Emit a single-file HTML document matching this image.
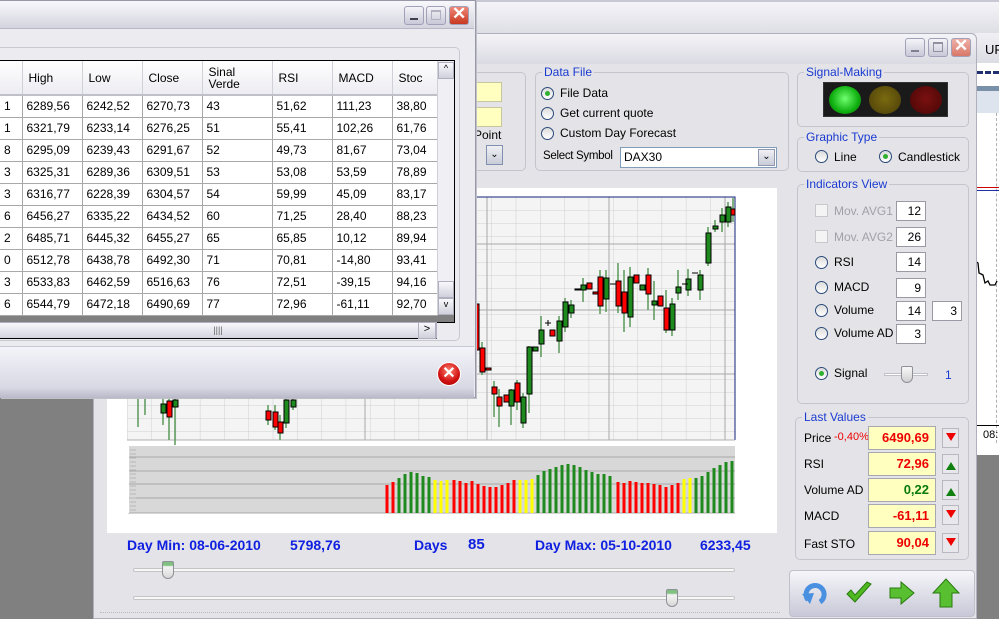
<!DOCTYPE html>
<html><head><meta charset="utf-8"><style>
*{box-sizing:border-box;margin:0;padding:0}
body{width:999px;height:619px;overflow:hidden;position:relative;background:#808080;font-family:"Liberation Sans",sans-serif;font-size:12px;color:#000}
.a{position:absolute}
.grp{position:absolute;border:1px solid #c4c4cc;border-radius:5px}
.gt{position:absolute;top:-8px;left:6px;background:#e4e4e8;color:#1a3ad0;padding:0 2px;font-size:12px;line-height:14px}
.rad{position:absolute;width:13px;height:13px;border-radius:50%;border:1px solid #2a4a7a;background:linear-gradient(#dcdcdc,#fff)}
.rad.on::after{content:"";position:absolute;left:3px;top:3px;width:5px;height:5px;border-radius:50%;background:#30b030}
.inp{position:absolute;background:#fff;border:1px solid #9a9aa4;text-align:right;padding-right:4px;line-height:18px;height:20px}
.yv{position:absolute;background:#ffffc0;border:1px solid #a8a8b0;text-align:right;padding-right:6px;font-weight:bold;font-size:13px;line-height:22px;height:24px;width:68px;left:868px}
.arr{position:absolute;left:942px;width:17px;height:20px;border:1px solid #b8b8c0;background:#e8e8ec}
.lv{position:absolute;left:804px;font-size:12px}
.wb{position:absolute;width:20px;height:19px;border-radius:3px;border:1px solid #a0a0b8;background:linear-gradient(#f4f4f8,#c8c8d8)}
table{border-collapse:collapse;table-layout:fixed}
td{border-right:1px solid #a8a8a8;border-bottom:1px solid #a8a8a8;height:22px;padding-left:4px;font-size:12px;white-space:nowrap;overflow:hidden;background:#fff}
th{font-weight:normal;text-align:left;padding-left:6px;height:34px;border-right:1px solid #d0d0d8;background:linear-gradient(#fff,#ececf2);font-size:12px;line-height:12px;border-bottom:2px solid #c0c0c8}
.bl{position:absolute;color:#1020e0;font-weight:bold;font-size:14px}
</style></head><body>

<div class="a" style="left:0;top:0;width:999px;height:36px;background:linear-gradient(#f4f4f8,#dcdce4);border-top:2px solid #c8c8d4"></div>

<div class="a" style="left:975px;top:33px;width:24px;height:422px;background:#fff">
 <div class="a" style="left:0;top:0;width:24px;height:30px;background:linear-gradient(#f0f0f4,#dcdce4)"></div>
 <div class="a" style="left:10px;top:9px;font-size:13px">UF</div>
 <div class="a" style="left:2px;top:38px;width:22px;height:4px;border-top:3px dashed #203070"></div>
 <div class="a" style="left:0;top:53px;width:24px;height:5px;background:#7890a8"></div>
 <div class="a" style="left:0;top:58px;width:24px;height:22px;background:#dde4ee"></div>
 <div class="a" style="left:21px;top:80px;height:330px;border-left:1px dashed #b0b0b0"></div>
 <div class="a" style="left:0;top:154px;width:24px;height:1px;background:#c00"></div>
 <div class="a" style="left:0;top:157px;width:24px;height:1px;background:#2030a0"></div>
 <svg class="a" style="left:0;top:220px" width="24" height="40"><path d="M0 8 L3 10 L4 20 L8 22 L10 30 L13 28 L15 32 L20 32 L22 28" fill="none" stroke="#000" stroke-width="1.3"/></svg>
 <div class="a" style="left:0;top:392px;width:24px;height:1px;background:#000"></div>
 <div class="a" style="left:8px;top:396px;font-size:11px">08:</div>
</div>

<div class="a" style="left:93px;top:33px;width:884px;height:586px;background:#e4e4e8;border:1px solid #b0b0bc;border-radius:6px 6px 0 0">
 <div class="a" style="left:0;top:0;width:882px;height:30px;background:linear-gradient(#f4f4f8,#dadae2);border-radius:6px 6px 0 0"></div>
</div>
<div class="wb" style="left:905px;top:38px"><div class="a" style="left:5px;top:11px;width:8px;height:2px;background:#808090"></div></div>
<div class="wb" style="left:928px;top:38px"><div class="a" style="left:4px;top:3px;width:10px;height:10px;border:1px solid #9090a0;border-top-width:2px"></div></div>
<div class="wb" style="left:951px;top:38px;background:linear-gradient(#f0b0a8,#d87868)"><div class="a" style="left:2px;top:-3px;color:#fff;font-size:17px;font-weight:bold">✕</div></div>

<div class="grp" style="left:440px;top:72px;width:86px;height:99px"></div>
<div class="a" style="left:476px;top:82px;width:26px;height:20px;background:#ffffc0;border:1px solid #c8c8a0"></div>
<div class="a" style="left:476px;top:107px;width:26px;height:20px;background:#ffffc0;border:1px solid #c8c8a0"></div>
<div class="a" style="left:474px;top:128px">Point</div>
<div class="a" style="left:486px;top:145px;width:17px;height:20px;border:1px solid #8090b0;background:linear-gradient(#f0f0f4,#c8ccd8);font-size:10px;text-align:center;line-height:18px">&#8964;</div>

<div class="grp" style="left:535px;top:72px;width:254px;height:99px"><div class="gt">Data File</div></div>
<div class="rad on" style="left:541px;top:87px"></div><div class="a" style="left:560px;top:86px">File Data</div>
<div class="rad" style="left:541px;top:107px"></div><div class="a" style="left:560px;top:106px">Get current quote</div>
<div class="rad" style="left:541px;top:127px"></div><div class="a" style="left:560px;top:126px">Custom Day Forecast</div>
<div class="a" style="left:543px;top:150px;font-size:11.5px;letter-spacing:-0.3px">Select Symbol</div>
<div class="a" style="left:620px;top:147px;width:157px;height:21px;background:#fff;border:1px solid #7f9db9;padding-left:3px;line-height:19px">DAX30
 <div class="a" style="right:1px;top:1px;width:17px;height:17px;background:linear-gradient(#f0f0f4,#c8ccd8);border:1px solid #9098b0;font-size:10px;text-align:center;line-height:14px">&#8964;</div></div>

<div class="grp" style="left:797px;top:72px;width:172px;height:55px"><div class="gt">Signal-Making</div></div>
<div class="a" style="left:823px;top:82px;width:125px;height:35px;background:#1a1a1a;border:1px solid #333"></div>
<div class="a" style="left:829px;top:86px;width:32px;height:28px;border-radius:50%;background:radial-gradient(circle at 50% 45%,#70ff70,#10b010 60%,#0a6a0a)"></div>
<div class="a" style="left:869px;top:86px;width:32px;height:28px;border-radius:50%;background:radial-gradient(circle at 50% 45%,#7a6a10,#4a3e08)"></div>
<div class="a" style="left:910px;top:86px;width:32px;height:28px;border-radius:50%;background:radial-gradient(circle at 50% 45%,#7a1010,#480606)"></div>

<div class="grp" style="left:797px;top:137px;width:172px;height:35px"><div class="gt">Graphic Type</div></div>
<div class="rad" style="left:815px;top:150px"></div><div class="a" style="left:834px;top:150px">Line</div>
<div class="rad on" style="left:879px;top:150px"></div><div class="a" style="left:898px;top:150px">Candlestick</div>

<div class="grp" style="left:797px;top:184px;width:172px;height:220px"><div class="gt">Indicators View</div></div>
<div class="a" style="left:815px;top:204px;width:13px;height:13px;border:1px solid #c8c8cc;background:#f4f4f4"></div><div class="a" style="left:834px;top:204px;color:#a0a0a8">Mov. AVG1</div>
<div class="inp" style="left:896px;top:201px;width:30px">12</div>
<div class="a" style="left:815px;top:230px;width:13px;height:13px;border:1px solid #c8c8cc;background:#f4f4f4"></div><div class="a" style="left:834px;top:230px;color:#a0a0a8">Mov. AVG2</div>
<div class="inp" style="left:896px;top:227px;width:30px">26</div>
<div class="rad" style="left:815px;top:256px"></div><div class="a" style="left:834px;top:255px">RSI</div><div class="inp" style="left:896px;top:252px;width:30px">14</div>
<div class="rad" style="left:815px;top:281px"></div><div class="a" style="left:834px;top:280px">MACD</div><div class="inp" style="left:896px;top:278px;width:30px">9</div>
<div class="rad" style="left:815px;top:304px"></div><div class="a" style="left:834px;top:303px">Volume</div><div class="inp" style="left:896px;top:301px;width:30px">14</div><div class="inp" style="left:932px;top:301px;width:30px">3</div>
<div class="rad" style="left:815px;top:327px"></div><div class="a" style="left:834px;top:326px">Volume AD</div><div class="inp" style="left:896px;top:324px;width:30px">3</div>
<div class="rad on" style="left:815px;top:367px"></div><div class="a" style="left:834px;top:366px">Signal</div>
<div class="a" style="left:884px;top:373px;width:44px;height:3px;border:1px solid #c0c0c8;background:#fff"></div>
<div class="a" style="left:901px;top:366px;width:12px;height:17px;background:linear-gradient(#f8f8f8,#d0d0d0);border:1px solid #909098;border-radius:2px 2px 6px 6px"></div>
<div class="a" style="left:945px;top:368px;color:#1a3ad0">1</div>

<div class="grp" style="left:795px;top:417px;width:174px;height:143px"><div class="gt">Last Values</div></div>
<div class="lv" style="top:431px">Price</div><div class="a" style="left:834px;top:431px;color:#e00;font-size:11px">-0,40%</div>
<div class="yv" style="top:426px;color:#e00">6490,69</div><div class="arr" style="top:428px"><div class="a" style="left:3px;top:4px;border:5px solid transparent;border-top:8px solid #e00"></div></div>
<div class="lv" style="top:457px">RSI</div>
<div class="yv" style="top:452px;color:#e00">72,96</div><div class="arr" style="top:454px"><div class="a" style="left:3px;top:2px;border:5px solid transparent;border-bottom:8px solid #108010"></div></div>
<div class="lv" style="top:483px">Volume AD</div>
<div class="yv" style="top:478px;color:#0a7a0a">0,22</div><div class="arr" style="top:480px"><div class="a" style="left:3px;top:2px;border:5px solid transparent;border-bottom:8px solid #108010"></div></div>
<div class="lv" style="top:509px">MACD</div>
<div class="yv" style="top:504px;color:#e00">-61,11</div><div class="arr" style="top:505px"><div class="a" style="left:3px;top:4px;border:5px solid transparent;border-top:8px solid #e00"></div></div>
<div class="lv" style="top:537px">Fast STO</div>
<div class="yv" style="top:531px;color:#e00">90,04</div><div class="arr" style="top:533px"><div class="a" style="left:3px;top:4px;border:5px solid transparent;border-top:8px solid #e00"></div></div>

<div class="a" style="left:789px;top:570px;width:186px;height:47px;background:linear-gradient(#f6f6fa,#c8c8d8);border-radius:4px;border:1px solid #c0c0cc"></div>
<svg class="a" style="left:800px;top:580px" width="30" height="28"><path d="M8 20 A9 9 0 1 1 20 22" fill="none" stroke="#4a90e0" stroke-width="5"/><path d="M2 14 L10 24 L14 13 Z" fill="#4a90e0"/></svg>
<svg class="a" style="left:845px;top:580px" width="28" height="26"><path d="M2 14 L10 22 L26 4 L22 2 L10 15 L6 10 Z" fill="#50b820" stroke="#2a7a10"/></svg>
<svg class="a" style="left:888px;top:579px" width="28" height="28"><path d="M2 9 H13 V3 L26 14 L13 25 V19 H2 Z" fill="#58c030" stroke="#2a7a10"/></svg>
<svg class="a" style="left:931px;top:578px" width="30" height="30"><path d="M15 1 L28 15 H21 V29 H9 V15 H2 Z" fill="#58c030" stroke="#2a7a10"/></svg>

<div class="a" style="left:107px;top:188px;width:670px;height:345px;background:#fff"></div>
<svg class="a" style="left:0;top:0" width="780" height="619">
 <defs>
  <pattern id="g" x="127" y="197" width="24.3" height="13" patternUnits="userSpaceOnUse"><path d="M0 0V13M0 0H24.3" stroke="#cfcfcf" stroke-width="1"/></pattern>
 </defs>
 <rect x="127" y="197" width="608" height="243" fill="#f4f4f4"/>
 <rect x="127" y="197" width="608" height="243" fill="url(#g)"/>
 <path d="M127 244H735M127 310H735M127 374H735M487 197V440M609 197V440M365 197V440M725 197V440" stroke="#a8a8a8"/>
 <path d="M127 197H735V440" stroke="#10207a" fill="none"/>
 <path d="M127 440H735" stroke="#b0b0b0"/>
 <g stroke="#5a9a5a" stroke-width="1.5">
  <path d="M482 342V375M494 381V417M499 389V427M511 389V425M517 380V410M523 393V428M529 346V413M541 316V357M559 316V353M565 298V332M571 300V318M583 278V302M600 270V314M606 270V312M618 263V313M624 270V332M630 267V327M648 268V310M654 281V320M666 290V333M672 298V336M678 270V300M688 269V296M700 270V300M708 227V266M715 220V232M722 208V232M728 202V227M733 198V222M138 398V427M145 395V415M163 398V425M169 398V440M175 398V445M268 405V425M275 405V430M280 415V440M286 398V428M293 398V410"/>
 </g>
 <g stroke="#000" stroke-width="1">
  <rect x="475" y="304" width="4" height="46" fill="#f00"/>
  <rect x="480" y="348" width="5" height="24" fill="#f00"/>
  <rect x="486" y="368" width="5" height="2" fill="#f00"/>
  <rect x="492" y="387" width="5" height="7" fill="#f00"/>
  <rect x="497" y="397" width="5" height="9" fill="#f00"/>
  <rect x="504" y="395" width="5" height="7" fill="#f00"/>
  <rect x="509" y="390" width="5" height="16" fill="#1e8a1e"/>
  <rect x="515" y="383" width="5" height="19" fill="#f00"/>
  <rect x="521" y="397" width="5" height="26" fill="#1e8a1e"/>
  <rect x="527" y="347" width="5" height="47" fill="#1e8a1e"/>
  <rect x="533" y="347" width="5" height="4" fill="#1e8a1e"/>
  <rect x="539" y="330" width="5" height="14" fill="#1e8a1e"/>
  <rect x="550" y="330" width="5" height="6" fill="#f00"/>
  <rect x="557" y="321" width="5" height="20" fill="#1e8a1e"/>
  <rect x="563" y="302" width="5" height="25" fill="#1e8a1e"/>
  <rect x="569" y="305" width="5" height="8" fill="#1e8a1e"/>
  <rect x="575" y="289" width="5" height="1" fill="#000"/>
  <rect x="581" y="285" width="5" height="5" fill="#1e8a1e"/>
  <rect x="587" y="283" width="5" height="6" fill="#f00"/>
  <rect x="593" y="292" width="5" height="2" fill="#f00"/>
  <rect x="598" y="277" width="5" height="29" fill="#f00"/>
  <rect x="604" y="278" width="5" height="21" fill="#1e8a1e"/>
  <rect x="616" y="281" width="5" height="25" fill="#f00"/>
  <rect x="622" y="292" width="5" height="21" fill="#f00"/>
  <rect x="628" y="277" width="5" height="40" fill="#1e8a1e"/>
  <rect x="634" y="275" width="5" height="8" fill="#f00"/>
  <rect x="640" y="285" width="5" height="5" fill="#1e8a1e"/>
  <rect x="646" y="275" width="5" height="19" fill="#f00"/>
  <rect x="652" y="301" width="5" height="4" fill="#1e8a1e"/>
  <rect x="658" y="296" width="5" height="10" fill="#f00"/>
  <rect x="664" y="308" width="5" height="22" fill="#f00"/>
  <rect x="670" y="304" width="5" height="26" fill="#1e8a1e"/>
  <rect x="676" y="287" width="5" height="6" fill="#1e8a1e"/>
  <rect x="686" y="279" width="5" height="11" fill="#1e8a1e"/>
  <rect x="698" y="275" width="5" height="15" fill="#1e8a1e"/>
  <rect x="706" y="233" width="5" height="30" fill="#1e8a1e"/>
  <rect x="713" y="226" width="5" height="3" fill="#1e8a1e"/>
  <rect x="720" y="215" width="5" height="7" fill="#1e8a1e"/>
  <rect x="726" y="207" width="5" height="15" fill="#1e8a1e"/>
  <rect x="731" y="209" width="4" height="6" fill="#f00"/>
  <rect x="161" y="404" width="5" height="9" fill="#1e8a1e"/>
  <rect x="167" y="401" width="5" height="16" fill="#f00"/>
  <rect x="173" y="400" width="5" height="7" fill="#1e8a1e"/>
  <rect x="266" y="411" width="5" height="9" fill="#f00"/>
  <rect x="273" y="412" width="5" height="15" fill="#f00"/>
  <rect x="278" y="422" width="5" height="11" fill="#f00"/>
  <rect x="284" y="400" width="5" height="23" fill="#1e8a1e"/>
  <rect x="291" y="400" width="5" height="7" fill="#1e8a1e"/>
 </g>
 <path d="M545 323h6M548 320v6M610 284h6M682 284h6M692 273h6" stroke="#000"/>
 <rect x="128" y="446" width="607" height="67" fill="#d8d8d8"/>
 <path d="M128 457H735M128 471H735M128 484H735M128 498H735M128 513H735" stroke="#a8a8a8"/>
 <path d="M128 446V513" stroke="#fff" stroke-width="2"/>
 <path d="M130 450h6M130 454h6M130 458h6M130 462h6M130 466h6M130 470h6M130 474h6M130 478h6M130 482h6M130 486h6M130 490h6M130 494h6M130 498h6M130 502h6M130 506h6M130 510h6" stroke="#b8b8b8"/>
 <g stroke-width="3">
 <path stroke="#f00" d="M387 513V485M393 513V482M454 513V480M460 513V481M466 513V483M472 513V481M478 513V484M484 513V486M490 513V487M496 513V487M502 513V485M508 513V483M514 513V480M618 513V482M624 513V483M630 513V481M636 513V482M642 513V483M648 513V483M654 513V484M660 513V485M666 513V487M672 513V485M678 513V483"/>
 <path stroke="#1e8a1e" d="M399 513V478M405 513V474M411 513V472M417 513V473M423 513V476M429 513V477M538 513V475M544 513V471M550 513V469M556 513V467M562 513V465M568 513V464M574 513V465M580 513V467M586 513V470M592 513V472M598 513V474M604 513V474M610 513V476M696 513V478M702 513V476M708 513V472M714 513V468M720 513V465M726 513V462M732 513V461"/>
 <path stroke="#ff0" d="M435 513V480M441 513V481M447 513V480M520 513V480M526 513V480M532 513V479M684 513V479M690 513V478"/>
 </g>
</svg>

<div class="bl" style="left:127px;top:537px">Day Min: 08-06-2010</div>
<div class="bl" style="left:290px;top:537px">5798,76</div>
<div class="bl" style="left:414px;top:537px">Days</div>
<div class="bl" style="left:468px;top:536px;font-size:15px">85</div>
<div class="bl" style="left:535px;top:537px">Day Max: 05-10-2010</div>
<div class="bl" style="left:700px;top:537px">6233,45</div>
<div class="a" style="left:133px;top:568px;width:602px;height:4px;border:1px solid #c4c4c8;background:#f8f8f4;border-radius:2px"></div>
<div class="a" style="left:162px;top:561px;width:12px;height:18px;background:linear-gradient(#80c080 20%,#f4f4f4 30%,#d8d8d8);border:1px solid #909098;border-radius:2px 2px 6px 6px"></div>
<div class="a" style="left:133px;top:596px;width:602px;height:4px;border:1px solid #c4c4c8;background:#f8f8f4;border-radius:2px"></div>
<div class="a" style="left:666px;top:589px;width:12px;height:18px;background:linear-gradient(#80c080 20%,#f4f4f4 30%,#d8d8d8);border:1px solid #909098;border-radius:2px 2px 6px 6px"></div>
<div class="a" style="left:100px;top:612px;width:680px;border-top:1px dotted #b8b8c0"></div>

<div class="a" style="left:0;top:0;width:476px;height:398px;background:#ececf0;border:1px solid #9898a8;border-left:none;box-shadow:1px 1px 0 #c0c0c8">
 <div class="a" style="left:0;top:0;width:474px;height:28px;background:linear-gradient(#f8f8fc,#d4d4de);border-bottom:1px solid #b8b8c8"></div>
 <div class="a" style="left:0;top:46px;width:460px;height:294px;border:1px solid #c8c8d0;border-left:none;border-radius:0 5px 5px 0"></div>
 <div class="a" style="left:0;top:345px;width:474px;height:52px;background:linear-gradient(#f4f4fa,#d8d8e4 80%,#b8b8c8);border-top:1px solid #c8c8d4"></div>
</div>
<div class="wb" style="left:404px;top:6px"><div class="a" style="left:5px;top:11px;width:8px;height:2px;background:#404050"></div></div>
<div class="wb" style="left:426px;top:6px"><div class="a" style="left:4px;top:3px;width:10px;height:10px;border:1px solid #b0b0c0;border-top-width:2px"></div></div>
<div class="wb" style="left:449px;top:6px;background:linear-gradient(#f08878,#c83820)"><div class="a" style="left:2px;top:-3px;color:#fff;font-size:17px;font-weight:bold">✕</div></div>

<div class="a" style="left:0;top:60px;width:455px;height:263px;background:#808080;border:1px solid #000;border-left:none;overflow:hidden">
<table style="width:437px">
<colgroup><col style="width:22px"><col style="width:60px"><col style="width:60px"><col style="width:60px"><col style="width:70px"><col style="width:60px"><col style="width:60px"><col style="width:45px"></colgroup>
<tr><th></th><th>High</th><th>Low</th><th>Close</th><th>Sinal<br>Verde</th><th>RSI</th><th>MACD</th><th>Stoc</th></tr>
<tr><td>1</td><td>6289,56</td><td>6242,52</td><td>6270,73</td><td>43</td><td>51,62</td><td>111,23</td><td>38,80</td></tr>
<tr><td>1</td><td>6321,79</td><td>6233,14</td><td>6276,25</td><td>51</td><td>55,41</td><td>102,26</td><td>61,76</td></tr>
<tr><td>8</td><td>6295,09</td><td>6239,43</td><td>6291,67</td><td>52</td><td>49,73</td><td>81,67</td><td>73,04</td></tr>
<tr><td>3</td><td>6325,31</td><td>6289,36</td><td>6309,51</td><td>53</td><td>53,08</td><td>53,59</td><td>78,89</td></tr>
<tr><td>3</td><td>6316,77</td><td>6228,39</td><td>6304,57</td><td>54</td><td>59,99</td><td>45,09</td><td>83,17</td></tr>
<tr><td>6</td><td>6456,27</td><td>6335,22</td><td>6434,52</td><td>60</td><td>71,25</td><td>28,40</td><td>88,23</td></tr>
<tr><td>2</td><td>6485,71</td><td>6445,32</td><td>6455,27</td><td>65</td><td>65,85</td><td>10,12</td><td>89,94</td></tr>
<tr><td>0</td><td>6512,78</td><td>6438,78</td><td>6492,30</td><td>71</td><td>70,81</td><td>-14,80</td><td>93,41</td></tr>
<tr><td>3</td><td>6533,83</td><td>6462,59</td><td>6516,63</td><td>76</td><td>72,51</td><td>-39,15</td><td>94,16</td></tr>
<tr><td>6</td><td>6544,79</td><td>6472,18</td><td>6490,69</td><td>77</td><td>72,96</td><td>-61,11</td><td>92,70</td></tr>
</table>
 <div class="a" style="left:437px;top:0;width:17px;height:254px;background:#f0f0f4;border-left:1px solid #d0d0d8">
  <div class="a" style="left:0;top:1px;width:16px;height:17px;background:linear-gradient(#f8f8fc,#d0d0dc);border:1px solid #b0b0c0;font-size:9px;text-align:center">^</div>
  <div class="a" style="left:0;top:220px;width:16px;height:17px;background:linear-gradient(#f8f8fc,#d0d0dc);border:1px solid #b0b0c0"></div>
  <div class="a" style="left:0;top:237px;width:16px;height:17px;background:linear-gradient(#f8f8fc,#d0d0dc);border:1px solid #b0b0c0;font-size:9px;text-align:center">v</div>
 </div>
</div>
<div class="a" style="left:0;top:322px;width:437px;height:17px;background:linear-gradient(#f8f8fc,#d4d4e0);border:1px solid #b0b0c0;border-left:none;border-bottom:1px solid #000;font-size:9px;text-align:center;color:#666;line-height:14px">||||</div>
<div class="a" style="left:418px;top:322px;width:18px;height:17px;background:linear-gradient(#f8f8fc,#d0d0dc);border:1px solid #b0b0c0;font-size:11px;text-align:center">&gt;</div>
<div class="a" style="left:437px;top:362px;width:24px;height:24px;border-radius:50%;background:radial-gradient(circle at 50% 35%,#ff8070,#d01010 60%,#a00000);border:1px solid #fff;color:#fff;font-weight:bold;font-size:16px;text-align:center;line-height:22px">✕</div>
</body></html>
